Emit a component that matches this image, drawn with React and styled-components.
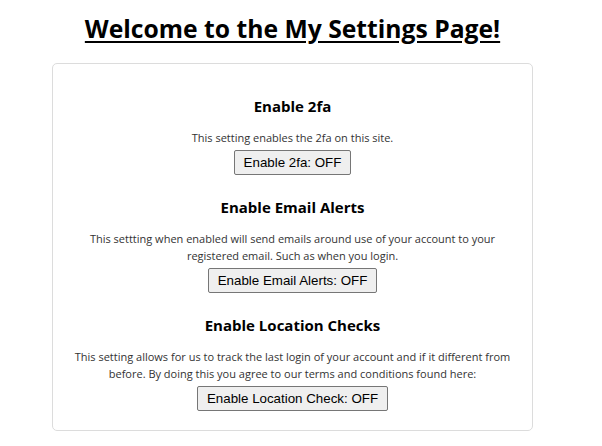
import React from "react";
import styled, { createGlobalStyle } from "styled-components";

const GlobalStyle = createGlobalStyle`
  body {
    margin: 0;
    background: #fff;
    font-family: "Open Sans", "Noto Sans", sans-serif;
    color: #000;
  }
`;

const Page = styled.div`
  width: 585px;
  padding-top: 14px;
`;

const H1 = styled.h1`
  margin: 0 0 19px 0;
  text-align: center;
  font-size: 24.7px;
  font-weight: 700;
  line-height: 30px;
  text-decoration: underline;
  text-underline-offset: 3px;
`;

const Card = styled.div`
  margin: 0 52px;
  border: 1px solid #dcdcdc;
  border-radius: 5px;
  padding: 32px 12px 19px;
  display: flex;
  flex-direction: column;
  gap: 22px;
`;

const Section = styled.section`
  display: flex;
  flex-direction: column;
  align-items: center;
  text-align: center;
`;

const Title = styled.h2`
  margin: 0 0 13px 0;
  font-size: 15px;
  font-weight: 700;
  line-height: 20px;
`;

const Text = styled.p`
  margin: 0 0 4px 0;
  font-size: 11px;
  line-height: 17px;
  color: #333;
  max-width: 445px;
`;

const Button = styled.button`
  font-family: "Liberation Sans", Arial, sans-serif;
  font-size: 13.33px;
  line-height: 15px;
  padding: 4px 9px;
  border: 1px solid #767676;
  border-radius: 2px;
  background: #efefef;
  color: #000;
`;

const settings = [
  {
    title: "Enable 2fa",
    text: "This setting enables the 2fa on this site.",
    button: "Enable 2fa: OFF",
  },
  {
    title: "Enable Email Alerts",
    text:
      "This settting when enabled will send emails around use of your account to your registered email. Such as when you login.",
    button: "Enable Email Alerts: OFF",
  },
  {
    title: "Enable Location Checks",
    text:
      "This setting allows for us to track the last login of your account and if it different from before. By doing this you agree to our terms and conditions found here:",
    button: "Enable Location Check: OFF",
  },
];

const App = () => (
  <Page>
    <GlobalStyle />
    <H1>Welcome to the My Settings Page!</H1>
    <Card>
      {settings.map((s) => (
        <Section key={s.title}>
          <Title>{s.title}</Title>
          <Text>{s.text}</Text>
          <Button>{s.button}</Button>
        </Section>
      ))}
    </Card>
  </Page>
);

export default App;
